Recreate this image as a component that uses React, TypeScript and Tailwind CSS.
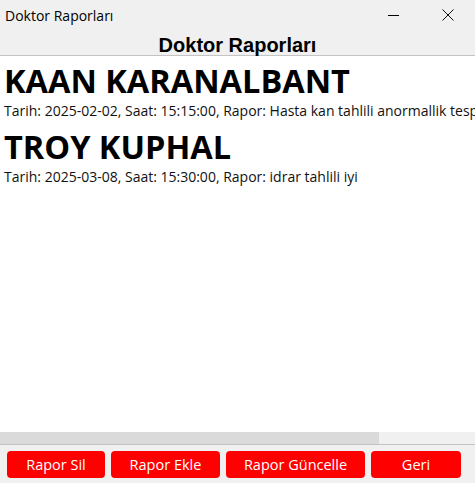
const reports = [
  {
    name: 'KAAN KARANALBANT',
    line: 'Tarih: 2025-02-02, Saat: 15:15:00, Rapor: Hasta kan tahlili anormallik tespit edildi',
  },
  {
    name: 'TROY KUPHAL',
    line: 'Tarih: 2025-03-08, Saat: 15:30:00, Rapor: idrar tahlili iyi',
  },
];

const buttons = [
  { label: 'Rapor Sil', w: 'w-[98px]' },
  { label: 'Rapor Ekle', w: 'w-[109px]' },
  { label: 'Rapor Güncelle', w: 'w-[139px]' },
  { label: 'Geri', w: 'w-[90px]' },
];

export default function App() {
  return (
    <div className="flex h-[483px] w-[475px] flex-col overflow-hidden bg-[#f0f0f0] font-['Open_Sans',sans-serif] text-black">
      {/* title bar */}
      <div className="flex h-[30px] items-center justify-between">
        <span className="pl-[5px] text-[14px]">Doktor Raporları</span>
        <div className="flex h-full items-center">
          <div className="flex w-[55px] justify-center">
            <div className="h-px w-[11px] bg-black" />
          </div>
          <div className="flex w-[54px] justify-center">
            <svg width="12" height="12" viewBox="0 0 12 12">
              <path d="M0.5 0.5 L11.5 11.5 M11.5 0.5 L0.5 11.5" stroke="#111" strokeWidth="1" />
            </svg>
          </div>
        </div>
      </div>

      {/* heading */}
      <div className="flex h-[26px] items-center justify-center border-b border-[#c4c4c4] pt-[4px] font-['Liberation_Sans',sans-serif] text-[20px] font-bold">
        Doktor Raporları
      </div>

      {/* content */}
      <div className="flex-1 overflow-hidden whitespace-nowrap bg-white pl-[4px] pt-[6px]">
        {reports.map((r) => (
          <div key={r.name} className="mb-[7px]">
            <div className="text-[32.5px] leading-[38px] font-bold">{r.name}</div>
            <div className="text-[14px] leading-[21px] text-[#111]">{r.line}</div>
          </div>
        ))}
      </div>

      {/* horizontal scrollbar */}
      <div className="flex h-[13px] border-b border-[#c4c4c4] bg-[#f0f0f0]">
        <div className="h-full w-[379px] bg-[#dadada]" />
      </div>

      {/* buttons */}
      <div className="flex gap-[6px] pb-[5px] pl-[7px] pt-[6px]">
        {buttons.map((b) => (
          <button
            key={b.label}
            className={`${b.w} h-[27px] rounded-[4px] bg-[#ff0000] text-[14.5px] text-white`}
          >
            {b.label}
          </button>
        ))}
      </div>
    </div>
  );
}
